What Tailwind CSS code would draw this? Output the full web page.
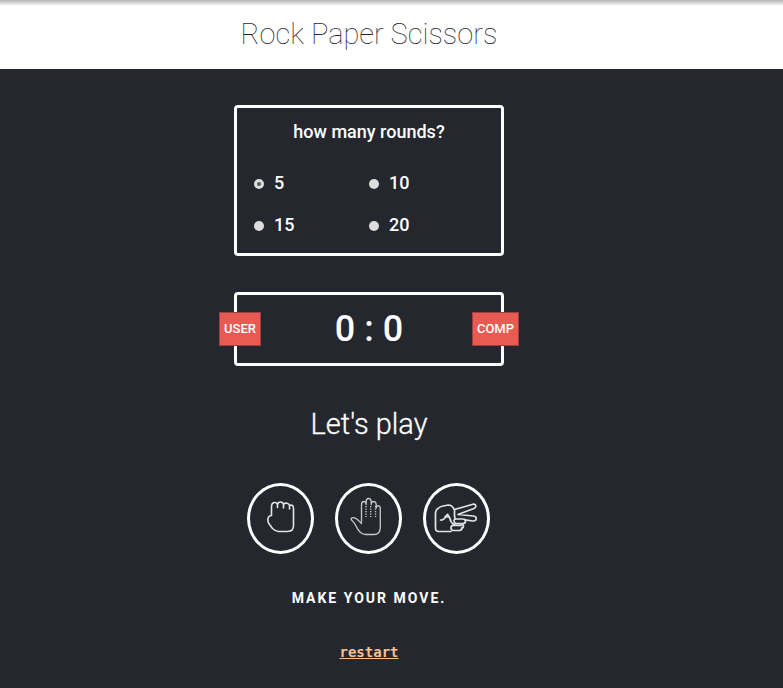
<!DOCTYPE html>
<html lang="en">
<head>
<meta charset="utf-8">
<meta name="viewport" content="width=device-width, initial-scale=1">
<title>Rock Paper Scissors</title>
<script src="https://cdn.jsdelivr.net/npm/@tailwindcss/browser@4"></script>
</head>
<body class="min-h-screen bg-[#25272f] font-['Roboto',sans-serif] text-white">
<header class="bg-white bg-linear-to-b from-[#b4b4b4] to-white to-[6px] pt-4 pb-[17px] pr-[45px] text-center">
  <h1 class="text-[29px] leading-9 font-thin text-[#24272e]">Rock Paper Scissors</h1>
</header>
<main class="flex flex-col items-center pt-9 pr-[45px]">
  <fieldset class="w-[270px] rounded border-3 border-white px-4 pt-[10px] pb-[14px]">
    <div id="q" class="text-center text-lg leading-7 font-medium">how many rounds?</div>
    <div class="mt-[23px] grid grid-cols-2 gap-y-[14px] pr-[2px] text-lg leading-7 font-medium" role="radiogroup" aria-labelledby="q">
      <label class="flex items-center gap-[10px]"><input type="radio" name="rounds" checked class="mt-[2px] ml-px size-[10px] appearance-none rounded-full bg-[#ddd] checked:bg-[#5a5a5a] checked:border-3 checked:border-[#ddd]">5</label>
      <label class="flex items-center gap-[10px]"><input type="radio" name="rounds" class="mt-[2px] ml-px size-[10px] appearance-none rounded-full bg-[#ddd] checked:bg-[#5a5a5a] checked:border-3 checked:border-[#ddd]">10</label>
      <label class="flex items-center gap-[10px]"><input type="radio" name="rounds" class="mt-[2px] ml-px size-[10px] appearance-none rounded-full bg-[#ddd] checked:bg-[#5a5a5a] checked:border-3 checked:border-[#ddd]">15</label>
      <label class="flex items-center gap-[10px]"><input type="radio" name="rounds" class="mt-[2px] ml-px size-[10px] appearance-none rounded-full bg-[#ddd] checked:bg-[#5a5a5a] checked:border-3 checked:border-[#ddd]">20</label>
    </div>
  </fieldset>

  <section class="relative mt-9 w-[270px] rounded border-3 border-white py-[10px] text-center">
    <span class="absolute top-[17px] -left-[18px] border border-[#9c4044] bg-[#e95a52] px-1 py-[7px] text-[13px] leading-[18px] font-medium">USER</span>
    <p class="text-4xl leading-12 font-medium"><span>0</span> : <span>0</span></p>
    <span class="absolute top-[17px] -right-[18px] border border-[#9c4044] bg-[#e95a52] px-1 py-[7px] text-[13px] leading-[18px] font-medium">COMP</span>
  </section>

  <h2 class="mt-10 text-[29px] leading-9 font-light [-webkit-text-stroke:0.3px_#fff]">Let's play</h2>

  <div class="mt-[41px] flex w-[244px] gap-[21px]">
    <button type="button" aria-label="Rock" class="flex h-[71px] w-[67px] items-center justify-center rounded-[50%] border-3 border-white">
      <svg class="h-[65px] w-[61px]" viewBox="0 0 61 65" fill="none" stroke="#e4e4e6" stroke-width="1.600" stroke-linecap="round" stroke-linejoin="round">
        <path d="M21.500 29.500V20.500Q21.500 17 24.200 16.500Q27 16.200 27.500 18.500Q28 16 30.500 16Q33 16 33.500 18.500Q34.500 16.800 37 17.200Q39 17.500 39.500 19.500Q41.500 18.500 43 20Q43.500 21 43.500 23V39.500Q43.500 45.500 37.500 45.500H28.500Q25.500 45.500 22.500 42.500L18.500 37Q17 32.500 19 30.500Q20 29.500 21.500 29.500M27.500 18.500V21.500M33.500 18.500V22M39.500 19.500V23"/>
      </svg>
    </button>
    <button type="button" aria-label="Paper" class="flex h-[71px] w-[67px] items-center justify-center rounded-[50%] border-3 border-white">
      <svg class="h-[65px] w-[61px]" viewBox="0 0 61 65" fill="none" stroke="#c8c8cb" stroke-width="1.300" stroke-linecap="round" stroke-linejoin="round">
        <path d="M23.500 36V19Q23.500 15.500 25.700 15.500Q28 15.500 28.200 18.500V15.500Q28.200 12.500 30.700 12.500Q33 12.500 33.200 15.500V18.500Q33.300 15.500 35.600 15.500Q38 15.500 38.200 18.500V22Q38.500 19.700 40.300 19.700Q42.300 20 42.300 23V41Q42.300 48.500 36 48.500H28Q25 48.500 22.500 46.500Q19.500 43.500 18 40Q16.500 36.500 13.500 34Q12.500 32 14.500 31.700Q18 31.500 20.500 34.500L23.500 37.500"/>
        <path d="M28 20V31M32.700 20V31M37.500 20V31" stroke-dasharray="1.200 1.300" stroke-width="1.400" stroke-linecap="butt"/>
      </svg>
    </button>
    <button type="button" aria-label="Scissors" class="flex h-[71px] w-[67px] items-center justify-center rounded-[50%] border-3 border-white">
      <svg class="h-[65px] w-[61px]" viewBox="0 0 61 65" fill="none" stroke="#e4e4e6" stroke-width="1.700" stroke-linecap="round" stroke-linejoin="round">
        <path d="M25 45.500H13Q9.500 45.500 9.500 42V27Q9.500 24 12 22.500Q14 20.500 17 20L22.500 19Q26 19 28.500 24V30Q29 32 29 33"/>
        <path d="M28.500 23.500L47 18.200Q49.500 17.800 49.800 20Q50 21.800 48 22.500L32 28.500L47.500 30Q50.500 30.500 50.200 33Q50 35 47 35L39 33.800"/>
        <path d="M14.500 34Q17 34.500 19 32L21.500 28.300L24 32.500Q24.500 36.500 28 38.500M19 30.500L22.500 31"/>
        <path d="M30 33H37Q39.500 33 39.500 35.200Q39.500 37.500 37 37.500H30Q28 37 28 35Q28 33 30 33M29 37.500H35.500Q37.500 38 37.500 40Q37.500 42 35.500 42M35.500 39.300H27Q25 39.500 25 41.700Q25 44.300 27.500 44.500H33.500Q36 44 36 42"/>
      </svg>
    </button>
  </div>

  <p class="mt-[34px] text-sm leading-5 font-bold tracking-[2px]">MAKE YOUR MOVE.</p>
  <a href="#" class="mt-[34px] mb-4 font-['DejaVu_Sans_Mono',monospace] text-sm leading-5 font-bold text-[#f9bf8f] underline">restart</a>
</main>
</body>
</html>
